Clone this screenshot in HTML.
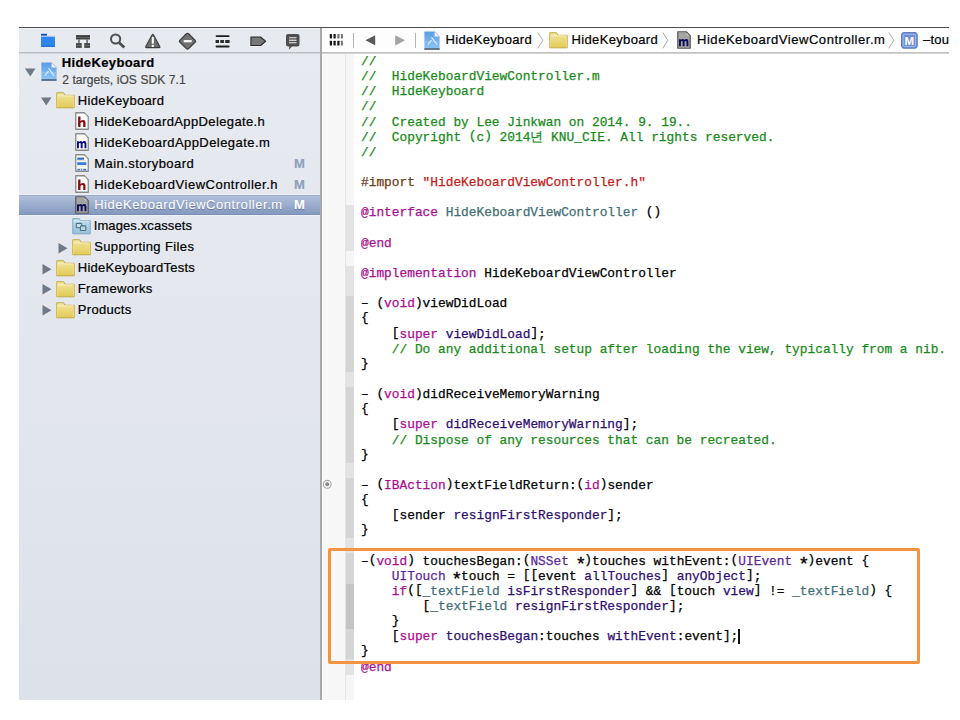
<!DOCTYPE html>
<html><head><meta charset="utf-8"><style>
html,body{margin:0;padding:0;width:960px;height:720px;overflow:hidden;background:#fff;}
body{position:relative;font-family:"Liberation Sans",sans-serif;}
.t{position:absolute;white-space:pre;line-height:15px;font-family:"Liberation Sans",sans-serif;-webkit-text-stroke:0.2px;}
.br{position:relative;top:-1.5px} .bc{position:relative;top:-1px}
pre{margin:0;font-family:"Liberation Mono",monospace;-webkit-text-stroke:0.25px;}
</style></head><body>
<div style="position:absolute;left:19px;top:27px;width:930px;height:1px;background:#4e4e4e"></div>
<!-- sidebar -->
<div style="position:absolute;left:19px;top:28px;width:301px;height:672px;background:linear-gradient(#e7eaef,#e3e6ed 50%,#dde1e9)"></div>
<div style="position:absolute;left:19px;top:28px;width:301px;height:1px;background:#f1f3f6"></div>
<div style="position:absolute;left:19px;top:52px;width:301px;height:1px;background:#b9bcc1"></div>
<div style="position:absolute;left:19px;top:53px;width:301px;height:1px;background:#d3d6db"></div>
<svg style="position:absolute;left:40px;top:33px" width="16" height="15" viewBox="0 0 16 15">
<rect x="1" y="0.8" width="6" height="2" fill="#0a4fd0"/>
<rect x="1" y="2.8" width="14" height="1" fill="#b8cdf0"/>
<rect x="1" y="3.8" width="14" height="10" fill="#2d86ee"/>
<rect x="1" y="12.8" width="14" height="1" fill="#1a6ad8"/>
</svg>
<svg style="position:absolute;left:75px;top:34px" width="16" height="15" viewBox="0 0 16 15">
<rect x="1" y="1.1" width="14" height="4.4" fill="#3e3e3e"/>
<rect x="1" y="3.4" width="14" height="0.7" fill="#777"/>
<rect x="3.25" y="5.5" width="1.4" height="3.7" fill="#5a5a5a"/>
<rect x="11.4" y="5.5" width="1.4" height="3.7" fill="#5a5a5a"/>
<rect x="1" y="9.1" width="5.75" height="4.8" fill="#454545"/>
<rect x="9.25" y="9.1" width="5.75" height="4.8" fill="#454545"/>
<rect x="1" y="11.3" width="5.75" height="0.7" fill="#777"/>
<rect x="9.25" y="11.3" width="5.75" height="0.7" fill="#777"/>
</svg>
<svg style="position:absolute;left:109px;top:33px" width="18" height="16" viewBox="0 0 18 16">
<circle cx="6.6" cy="6" r="4.6" fill="none" stroke="#4f4f4f" stroke-width="2"/>
<path d="M10 9.5 L15.3 14.6" stroke="#4f4f4f" stroke-width="2.8" stroke-linecap="butt"/>
</svg>
<svg style="position:absolute;left:144px;top:33px" width="18" height="16" viewBox="0 0 18 16">
<path d="M8.8 1.3 Q9.3 1.3 9.6 1.9 L15.9 13.8 Q16.1 14.6 15.3 14.6 H2.3 Q1.5 14.6 1.7 13.8 L8 1.9 Q8.3 1.3 8.8 1.3 Z" fill="#6e6e6e" stroke="#3c3c3c" stroke-width="1.1" stroke-linejoin="round"/>
<rect x="7.8" y="3.8" width="2" height="7" rx="0.9" fill="#fff"/>
<circle cx="8.8" cy="12.9" r="1.2" fill="#fff"/>
</svg>
<svg style="position:absolute;left:178px;top:32px" width="19" height="19" viewBox="0 0 19 19">
<path d="M9.5 1.3 Q10.1 1.3 10.6 1.8 L17.2 8.4 Q18.0 9.2 17.2 10.0 L10.6 16.6 Q9.5 17.6 8.4 16.6 L1.8 10.0 Q1.0 9.2 1.8 8.4 L8.4 1.8 Q8.9 1.3 9.5 1.3 Z" fill="#717171" stroke="#3e3e3e" stroke-width="1.3" stroke-linejoin="round"/>
<rect x="5.7" y="8.1" width="8" height="2.2" fill="#fff"/>
</svg>
<svg style="position:absolute;left:215px;top:34px" width="16" height="15" viewBox="0 0 16 15">
<rect x="0.6" y="1.2" width="14" height="1.8" rx="0.9" fill="#1e1e1e"/>
<rect x="0.6" y="6" width="3.4" height="3" fill="#2a2a2a"/>
<rect x="5.3" y="6" width="3.6" height="3" fill="#2a2a2a"/>
<rect x="10.2" y="6" width="4.4" height="3" fill="#2a2a2a"/>
<rect x="0.6" y="11.6" width="14" height="1.8" rx="0.9" fill="#1e1e1e"/>
</svg>
<svg style="position:absolute;left:250px;top:36px" width="17" height="11" viewBox="0 0 17 11">
<path d="M0.9 1 H10.6 L15.6 5.25 L10.6 9.5 H0.9 Z" fill="#777" stroke="#2e2e2e" stroke-width="1.1" stroke-linejoin="round"/>
</svg>
<svg style="position:absolute;left:285px;top:33px" width="16" height="18" viewBox="0 0 16 18">
<path d="M3 1 H12.5 Q14.5 1 14.5 3 V11.5 Q14.5 13.5 12.5 13.5 H7 L3.8 16.8 L4.4 13.5 H3 Q1 13.5 1 11.5 V3 Q1 1 3 1 Z" fill="#4f4f4f"/>
<rect x="4" y="4" width="7.5" height="1.3" fill="#c8c8c8"/>
<rect x="4" y="6.6" width="7.5" height="1.3" fill="#e0e0e0"/>
<rect x="4" y="9" width="7.5" height="1.3" fill="#d0d0d0"/>
</svg>
<svg style="position:absolute;left:25px;top:67.5px" width="11" height="9" viewBox="0 0 11 9"><path d="M0 0.5 H10.5 L5.25 8.5 Z" fill="#6f7a87"/></svg>
<svg style="position:absolute;left:41px;top:62px" width="16" height="19" viewBox="0 0 16 19">
<defs><linearGradient id="ap41" x1="0" y1="0" x2="0" y2="1"><stop offset="0" stop-color="#5b9be3"/><stop offset="1" stop-color="#8fc7f8"/></linearGradient></defs>
<path d="M0.4 0.4 H10.6 L15.6 5.4 V18.6 H0.4 Z" fill="url(#ap41)"/>
<path d="M10.6 0.4 V5.4 H15.6 Z" fill="#f6f9fc"/>
<path d="M10.6 0.4 L15.6 5.4" stroke="#9bb7d6" stroke-width="0.6"/>
<rect x="0.4" y="17.2" width="15.2" height="1.6" fill="#4f5f78"/>
<rect x="1" y="10.2" width="14" height="1.3" fill="#a6cdf3" opacity="0.6"/>
<path d="M7.8 6.6 L12.8 13.4 M7.2 9.4 L4.2 13.4" stroke="#d9ecff" stroke-width="1.2" stroke-linecap="round" fill="none"/>
</svg>
<div class="t" style="left:61.7px;top:55.25px;font-size:13px;letter-spacing:0.39px;color:#000;font-weight:bold;">HideKeyboard</div>
<div class="t" style="left:62.2px;top:72.60px;font-size:12px;letter-spacing:0.1px;color:#474747;">2 targets, iOS SDK 7.1</div>
<svg style="position:absolute;left:41px;top:97px" width="11" height="9" viewBox="0 0 11 9"><path d="M0 0.5 H10.5 L5.25 8.5 Z" fill="#6f7a87"/></svg>
<svg style="position:absolute;left:56px;top:92px" width="20" height="17" viewBox="0 0 20 17">
<defs><linearGradient id="fg560920" x1="0" y1="0" x2="0" y2="1"><stop offset="0" stop-color="#f3e6a0"/><stop offset="1" stop-color="#e2ca55"/></linearGradient></defs>
<path d="M0.8 0.7 H7.6 L9.0 3.3 H18.2 V15.8 H0.8 Z" fill="url(#fg560920)" stroke="#c2aa48" stroke-width="1" stroke-linejoin="round"/>
<path d="M1.3 3.8 H17.7" stroke="#fbf3c6" stroke-width="0.9"/>
<path d="M1.6 4.2 V15.2 M17.4 4.2 V15.2" stroke="#f2e27e" stroke-width="0.8"/>
</svg>
<div class="t" style="left:77.8px;top:92.90px;font-size:13px;letter-spacing:0.35px;color:#000;">HideKeyboard</div>
<svg style="position:absolute;left:75px;top:112.4px" width="14" height="18" viewBox="0 0 14 18">
<path d="M0.75 0.75 H9.3 L13.25 4.7 V17.25 H0.75 Z" fill="#fff" stroke="#8a8a8a" stroke-width="1.3" stroke-linejoin="round"/>
<path d="M9.6 1.6 L12.4 4.4 H10.2 Q9.6 4.4 9.6 3.8 Z" fill="#f3f3f3"/>
<path d="M3.1 4.6 H5.5 V9.2 Q6.4 8.0 8.1 8.0 Q10.5 8.0 10.5 10.4 V15.1 H8.2 V11.0 Q8.2 9.9 7.1 9.9 Q5.5 9.9 5.5 11.6 V15.1 H3.1 Z" fill="#8a0f14"/>
</svg>
<div class="t" style="left:94.2px;top:113.80px;font-size:13px;letter-spacing:0.38px;color:#000;">HideKeboardAppDelegate.h</div>
<svg style="position:absolute;left:75px;top:133.29999999999998px" width="14" height="18" viewBox="0 0 14 18">
<path d="M0.75 0.75 H9.3 L13.25 4.7 V17.25 H0.75 Z" fill="#fff" stroke="#8a8a8a" stroke-width="1.3" stroke-linejoin="round"/>
<path d="M9.6 1.6 L12.4 4.4 H10.2 Q9.6 4.4 9.6 3.8 Z" fill="#f3f3f3"/>
<path d="M2.0 8.3 H3.9 V9.2 Q4.6 8.1 5.8 8.1 Q6.9 8.1 7.3 9.1 Q8.0 8.1 9.3 8.1 Q11.4 8.1 11.4 10.3 V15.3 H9.5 V10.8 Q9.5 9.9 8.7 9.9 Q7.6 9.9 7.6 11.1 V15.3 H5.7 V10.8 Q5.7 9.9 4.9 9.9 Q3.9 9.9 3.9 11.1 V15.3 H2.0 Z" fill="#0c0c82"/>
</svg>
<div class="t" style="left:94.2px;top:134.70px;font-size:13px;letter-spacing:0.44px;color:#000;">HideKeboardAppDelegate.m</div>
<svg style="position:absolute;left:75px;top:154.2px" width="14" height="18" viewBox="0 0 14 18">
<path d="M0.75 0.75 H9.3 L13.25 4.7 V17.25 H0.75 Z" fill="#fff" stroke="#8a8a8a" stroke-width="1.3" stroke-linejoin="round"/>
<path d="M9.6 1.6 L12.4 4.4 H10.2 Q9.6 4.4 9.6 3.8 Z" fill="#f3f3f3"/>
<rect x="2.2" y="3.6" width="6.8" height="2.1" fill="#2f67b5"/>
<rect x="2.2" y="6.3" width="9.2" height="1" fill="#d8d2c8"/>
<rect x="2.2" y="8.2" width="9.2" height="2.9" fill="#3a80d2"/>
<rect x="2.2" y="11.6" width="9.2" height="0.8" fill="#d8d2c8"/>
<rect x="2.2" y="14" width="9.2" height="0.8" fill="#d8d2c8"/>
<rect x="2.2" y="14.9" width="3" height="1.5" rx="0.7" fill="#3a80d2"/><rect x="5.8" y="14.9" width="1.6" height="1.5" rx="0.7" fill="#3a80d2"/><rect x="8.0" y="14.9" width="3.4" height="1.5" rx="0.7" fill="#3a80d2"/>
</svg>
<div class="t" style="left:94.2px;top:155.60px;font-size:13px;letter-spacing:0.45px;color:#000;">Main.storyboard</div>
<div class="t" style="left:294px;top:155.60px;font-size:13px;letter-spacing:0px;color:#8da1bd;font-weight:bold;">M</div>
<svg style="position:absolute;left:75px;top:175.1px" width="14" height="18" viewBox="0 0 14 18">
<path d="M0.75 0.75 H9.3 L13.25 4.7 V17.25 H0.75 Z" fill="#fff" stroke="#8a8a8a" stroke-width="1.3" stroke-linejoin="round"/>
<path d="M9.6 1.6 L12.4 4.4 H10.2 Q9.6 4.4 9.6 3.8 Z" fill="#f3f3f3"/>
<path d="M3.1 4.6 H5.5 V9.2 Q6.4 8.0 8.1 8.0 Q10.5 8.0 10.5 10.4 V15.1 H8.2 V11.0 Q8.2 9.9 7.1 9.9 Q5.5 9.9 5.5 11.6 V15.1 H3.1 Z" fill="#8a0f14"/>
</svg>
<div class="t" style="left:94.2px;top:176.50px;font-size:13px;letter-spacing:0.5px;color:#000;">HideKeboardViewController.h</div>
<div class="t" style="left:294px;top:176.50px;font-size:13px;letter-spacing:0px;color:#8da1bd;font-weight:bold;">M</div>
<div style="position:absolute;left:19px;top:193.5px;width:301px;height:1.5px;background:#eef0f4"></div><div style="position:absolute;left:19px;top:215px;width:301px;height:1px;background:#edf0f4"></div><div style="position:absolute;left:19px;top:195px;width:301px;height:20px;background:linear-gradient(#b1c0dc,#8499be);border-top:1px solid #9dadc9;border-bottom:1px solid #7d92b8;box-sizing:border-box"></div>
<svg style="position:absolute;left:75px;top:196.0px" width="14" height="18" viewBox="0 0 14 18">
<path d="M0.75 0.75 H9.3 L13.25 4.7 V17.25 H0.75 Z" fill="#a4a4a4" stroke="#5a5a5a" stroke-width="1.2" stroke-linejoin="round"/>
<path d="M9.6 1.8 L12.2 4.4 H10.2 Q9.6 4.4 9.6 3.8 Z" fill="#c8c8c8"/>
<path d="M2.0 8.3 H3.9 V9.2 Q4.6 8.1 5.8 8.1 Q6.9 8.1 7.3 9.1 Q8.0 8.1 9.3 8.1 Q11.4 8.1 11.4 10.3 V15.3 H9.5 V10.8 Q9.5 9.9 8.7 9.9 Q7.6 9.9 7.6 11.1 V15.3 H5.7 V10.8 Q5.7 9.9 4.9 9.9 Q3.9 9.9 3.9 11.1 V15.3 H2.0 Z" fill="#0e0c5c"/>
</svg>
<div class="t" style="left:94.2px;top:197.40px;font-size:13px;letter-spacing:0.54px;color:#fff;text-shadow:0 1px 1px rgba(40,50,80,0.45);-webkit-text-stroke:0.1px;">HideKeboardViewController.m</div>
<div class="t" style="left:294px;top:197.40px;font-size:13px;letter-spacing:0px;color:#fff;font-weight:bold;text-shadow:0 1px 1px rgba(40,50,80,0.45);">M</div>
<svg style="position:absolute;left:72px;top:217.6px" width="20" height="17" viewBox="0 0 20 17">
<defs><linearGradient id="xcg" x1="0" y1="0" x2="0" y2="1"><stop offset="0" stop-color="#c4e0ee"/><stop offset="1" stop-color="#96c2da"/></linearGradient></defs>
<path d="M0.8 0.7 H7.4 L8.6 2.6 H18.2 V15.8 H0.8 Z" fill="url(#xcg)" stroke="#7ba4bc" stroke-width="1" stroke-linejoin="round"/>
<path d="M1.3 3.1 H17.7" stroke="#dff0f8" stroke-width="0.8"/>
<rect x="4.3" y="5.4" width="5.4" height="4.4" rx="0.8" fill="#c9e2ef" stroke="#4f7286" stroke-width="1.1"/>
<rect x="8.4" y="7.9" width="5.4" height="4.6" rx="0.8" fill="#b5d6e7" stroke="#4f7286" stroke-width="1.1"/>
</svg>
<div class="t" style="left:93.7px;top:218.30px;font-size:13px;letter-spacing:0.11px;color:#000;">Images.xcassets</div>
<svg style="position:absolute;left:58px;top:242.5px" width="10" height="11" viewBox="0 0 10 11"><path d="M0.5 0 V10.5 L9.5 5.25 Z" fill="#6f7a87"/></svg>
<svg style="position:absolute;left:72px;top:239px" width="20" height="17" viewBox="0 0 20 17">
<defs><linearGradient id="fg7202390" x1="0" y1="0" x2="0" y2="1"><stop offset="0" stop-color="#f3e6a0"/><stop offset="1" stop-color="#e2ca55"/></linearGradient></defs>
<path d="M0.8 0.7 H7.6 L9.0 3.3 H18.2 V15.8 H0.8 Z" fill="url(#fg7202390)" stroke="#c2aa48" stroke-width="1" stroke-linejoin="round"/>
<path d="M1.3 3.8 H17.7" stroke="#fbf3c6" stroke-width="0.9"/>
<path d="M1.6 4.2 V15.2 M17.4 4.2 V15.2" stroke="#f2e27e" stroke-width="0.8"/>
</svg>
<div class="t" style="left:94.2px;top:239.20px;font-size:13px;letter-spacing:0.39px;color:#000;">Supporting Files</div>
<svg style="position:absolute;left:41.5px;top:263.5px" width="10" height="11" viewBox="0 0 10 11"><path d="M0.5 0 V10.5 L9.5 5.25 Z" fill="#6f7a87"/></svg>
<svg style="position:absolute;left:56px;top:260.1px" width="20" height="17" viewBox="0 0 20 17">
<defs><linearGradient id="fg5602601" x1="0" y1="0" x2="0" y2="1"><stop offset="0" stop-color="#f3e6a0"/><stop offset="1" stop-color="#e2ca55"/></linearGradient></defs>
<path d="M0.8 0.7 H7.6 L9.0 3.3 H18.2 V15.8 H0.8 Z" fill="url(#fg5602601)" stroke="#c2aa48" stroke-width="1" stroke-linejoin="round"/>
<path d="M1.3 3.8 H17.7" stroke="#fbf3c6" stroke-width="0.9"/>
<path d="M1.6 4.2 V15.2 M17.4 4.2 V15.2" stroke="#f2e27e" stroke-width="0.8"/>
</svg>
<div class="t" style="left:77.8px;top:260.10px;font-size:13px;letter-spacing:0.27px;color:#000;">HideKeyboardTests</div>
<svg style="position:absolute;left:41.5px;top:284.4px" width="10" height="11" viewBox="0 0 10 11"><path d="M0.5 0 V10.5 L9.5 5.25 Z" fill="#6f7a87"/></svg>
<svg style="position:absolute;left:56px;top:281.0px" width="20" height="17" viewBox="0 0 20 17">
<defs><linearGradient id="fg5602810" x1="0" y1="0" x2="0" y2="1"><stop offset="0" stop-color="#f3e6a0"/><stop offset="1" stop-color="#e2ca55"/></linearGradient></defs>
<path d="M0.8 0.7 H7.6 L9.0 3.3 H18.2 V15.8 H0.8 Z" fill="url(#fg5602810)" stroke="#c2aa48" stroke-width="1" stroke-linejoin="round"/>
<path d="M1.3 3.8 H17.7" stroke="#fbf3c6" stroke-width="0.9"/>
<path d="M1.6 4.2 V15.2 M17.4 4.2 V15.2" stroke="#f2e27e" stroke-width="0.8"/>
</svg>
<div class="t" style="left:77.8px;top:281.00px;font-size:13px;letter-spacing:0.34px;color:#000;">Frameworks</div>
<svg style="position:absolute;left:41.5px;top:305.29999999999995px" width="10" height="11" viewBox="0 0 10 11"><path d="M0.5 0 V10.5 L9.5 5.25 Z" fill="#6f7a87"/></svg>
<svg style="position:absolute;left:56px;top:301.9px" width="20" height="17" viewBox="0 0 20 17">
<defs><linearGradient id="fg5603019" x1="0" y1="0" x2="0" y2="1"><stop offset="0" stop-color="#f3e6a0"/><stop offset="1" stop-color="#e2ca55"/></linearGradient></defs>
<path d="M0.8 0.7 H7.6 L9.0 3.3 H18.2 V15.8 H0.8 Z" fill="url(#fg5603019)" stroke="#c2aa48" stroke-width="1" stroke-linejoin="round"/>
<path d="M1.3 3.8 H17.7" stroke="#fbf3c6" stroke-width="0.9"/>
<path d="M1.6 4.2 V15.2 M17.4 4.2 V15.2" stroke="#f2e27e" stroke-width="0.8"/>
</svg>
<div class="t" style="left:77.8px;top:301.90px;font-size:13px;letter-spacing:0.3px;color:#000;">Products</div>
<!-- divider -->
<div style="position:absolute;left:320px;top:28px;width:2px;height:672px;background:#a9a9a9"></div>
<!-- jump bar -->
<div style="position:absolute;left:322px;top:28px;width:627px;height:24px;background:#fdfdfd"></div>

<div style="position:absolute;left:322px;top:28px;width:627px;height:24px;overflow:hidden">
<div style="position:absolute;left:-322px;top:-28px;width:960px;height:60px">
<svg style="position:absolute;left:329px;top:33px" width="15" height="14" viewBox="0 0 15 14">
<g fill="#151515">
<rect x="0.8" y="1" width="2.2" height="4.4" rx="0.5"/><rect x="4.5" y="1" width="2.2" height="4.4" rx="0.5"/>
<rect x="0.8" y="7.8" width="2.2" height="4.6" rx="0.5"/><rect x="4.5" y="7.8" width="2.2" height="4.6" rx="0.5"/><rect x="8.3" y="7.8" width="2.2" height="4.6" rx="0.5"/>
</g>
<g fill="#707070"><rect x="8.3" y="1" width="2.2" height="4.4" rx="0.5"/><rect x="11.9" y="1" width="2.0" height="4.4" rx="0.5"/><rect x="11.9" y="7.8" width="2.0" height="4.6" rx="0.5"/></g>
</svg>
<div style="position:absolute;left:353px;top:33px;width:1px;height:15px;background:#b4b4b4"></div>
<svg style="position:absolute;left:365px;top:35px" width="11" height="11" viewBox="0 0 11 11"><path d="M0.4 5.25 L10.2 0.2 V10.3 Z" fill="#5a5a5a"/></svg>
<svg style="position:absolute;left:394.5px;top:35px" width="11" height="11" viewBox="0 0 11 11"><path d="M0.2 0.2 V10.5 L10 5.35 Z" fill="#a3a3a3"/></svg>
<div style="position:absolute;left:415px;top:33px;width:1px;height:15px;background:#b4b4b4"></div>
<svg style="position:absolute;left:424px;top:30.5px" width="16" height="19" viewBox="0 0 16 19">
<defs><linearGradient id="ap424" x1="0" y1="0" x2="0" y2="1"><stop offset="0" stop-color="#5b9be3"/><stop offset="1" stop-color="#8fc7f8"/></linearGradient></defs>
<path d="M0.4 0.4 H10.6 L15.6 5.4 V18.6 H0.4 Z" fill="url(#ap424)"/>
<path d="M10.6 0.4 V5.4 H15.6 Z" fill="#f6f9fc"/>
<path d="M10.6 0.4 L15.6 5.4" stroke="#9bb7d6" stroke-width="0.6"/>
<rect x="0.4" y="17.2" width="15.2" height="1.6" fill="#4f5f78"/>
<rect x="1" y="10.2" width="14" height="1.3" fill="#a6cdf3" opacity="0.6"/>
<path d="M7.8 6.6 L12.8 13.4 M7.2 9.4 L4.2 13.4" stroke="#d9ecff" stroke-width="1.2" stroke-linecap="round" fill="none"/>
</svg>
<div class="t" style="left:445.5px;top:32.30px;font-size:13px;letter-spacing:0.35px;color:#000;">HideKeyboard</div>
<svg style="position:absolute;left:536.5px;top:32px" width="7" height="17" viewBox="0 0 7 17"><path d="M0.8 0.5 L5.8 8.3 L0.8 16.3" fill="none" stroke="#aaa" stroke-width="1"/></svg>
<svg style="position:absolute;left:548.5px;top:31.5px" width="20" height="17" viewBox="0 0 20 17">
<defs><linearGradient id="fg5485315" x1="0" y1="0" x2="0" y2="1"><stop offset="0" stop-color="#f3e6a0"/><stop offset="1" stop-color="#e2ca55"/></linearGradient></defs>
<path d="M0.8 0.7 H7.6 L9.0 3.3 H18.2 V15.8 H0.8 Z" fill="url(#fg5485315)" stroke="#c2aa48" stroke-width="1" stroke-linejoin="round"/>
<path d="M1.3 3.8 H17.7" stroke="#fbf3c6" stroke-width="0.9"/>
<path d="M1.6 4.2 V15.2 M17.4 4.2 V15.2" stroke="#f2e27e" stroke-width="0.8"/>
</svg>
<div class="t" style="left:571.5px;top:32.30px;font-size:13px;letter-spacing:0.35px;color:#000;">HideKeyboard</div>
<svg style="position:absolute;left:662px;top:32px" width="7" height="17" viewBox="0 0 7 17"><path d="M0.8 0.5 L5.8 8.3 L0.8 16.3" fill="none" stroke="#aaa" stroke-width="1"/></svg>
<svg style="position:absolute;left:676.5px;top:30.8px" width="14" height="18" viewBox="0 0 14 18">
<path d="M0.75 0.75 H9.3 L13.25 4.7 V17.25 H0.75 Z" fill="#a4a4a4" stroke="#5a5a5a" stroke-width="1.2" stroke-linejoin="round"/>
<path d="M9.6 1.8 L12.2 4.4 H10.2 Q9.6 4.4 9.6 3.8 Z" fill="#c8c8c8"/>
<path d="M2.0 8.3 H3.9 V9.2 Q4.6 8.1 5.8 8.1 Q6.9 8.1 7.3 9.1 Q8.0 8.1 9.3 8.1 Q11.4 8.1 11.4 10.3 V15.3 H9.5 V10.8 Q9.5 9.9 8.7 9.9 Q7.6 9.9 7.6 11.1 V15.3 H5.7 V10.8 Q5.7 9.9 4.9 9.9 Q3.9 9.9 3.9 11.1 V15.3 H2.0 Z" fill="#0e0c5c"/>
</svg>
<div class="t" style="left:697px;top:32.30px;font-size:13px;letter-spacing:0.54px;color:#000;">HideKeboardViewController.m</div>
<svg style="position:absolute;left:887.5px;top:32px" width="7" height="17" viewBox="0 0 7 17"><path d="M0.8 0.5 L5.8 8.3 L0.8 16.3" fill="none" stroke="#aaa" stroke-width="1"/></svg>
<svg style="position:absolute;left:901px;top:31.5px" width="17" height="17" viewBox="0 0 17 17">
<rect x="0.6" y="0.6" width="15.6" height="15.6" rx="2.2" fill="#6e90d6" stroke="#5577bb" stroke-width="1"/>
<rect x="2.2" y="2.2" width="12.4" height="12.4" rx="1" fill="none" stroke="#a9c0ee" stroke-width="0.9"/>
<text x="8.4" y="12.9" text-anchor="middle" font-family="Liberation Sans" font-weight="bold" font-size="11.5" fill="#fff">M</text>
</svg>
<div class="t" style="left:923px;top:32.30px;font-size:13px;letter-spacing:0.2px;color:#000;">–touchesBegan:withEvent:</div>
</div></div>
<!-- gutter -->
<div style="position:absolute;left:322px;top:28px;width:1px;height:672px;background:#fafafa"></div>
<div style="position:absolute;left:323px;top:53px;width:22px;height:647px;background:#f7f7f7"></div>
<div style="position:absolute;left:345px;top:53px;width:1px;height:647px;background:#e4e4e4"></div>
<div style="position:absolute;left:346px;top:53px;width:8px;height:647px;background:#f6f6f6"><div style="position:absolute;left:0;top:152.20px;width:8px;height:45.42px;background:#e3e3e3"></div><div style="position:absolute;left:0;top:212.76px;width:8px;height:408.78px;background:#e3e3e3"></div><div style="position:absolute;left:0;top:243.04px;width:8px;height:75.70px;background:#d5d5d5"></div><div style="position:absolute;left:0;top:333.88px;width:8px;height:75.70px;background:#d5d5d5"></div><div style="position:absolute;left:0;top:424.72px;width:8px;height:60.56px;background:#d5d5d5"></div><div style="position:absolute;left:0;top:500.42px;width:8px;height:105.98px;background:#d5d5d5"></div><div style="position:absolute;left:0;top:530.70px;width:8px;height:45.42px;background:#c4c4c4"></div></div>
<div style="position:absolute;left:322px;top:52px;width:627px;height:1px;background:#c2c2c2"></div><div style="position:absolute;left:322px;top:53px;width:627px;height:1px;background:#d2d2d2"></div>
<svg style="position:absolute;left:322px;top:479px" width="11" height="11" viewBox="0 0 11 11"><circle cx="5.25" cy="5.3" r="3.9" fill="none" stroke="#a8a8a8" stroke-width="1.1"/><circle cx="5.25" cy="5.3" r="2" fill="#8a8a8a"/></svg>
<!-- code -->
<pre style="position:absolute;left:361px;top:54.0px;font-size:12.83px;line-height:15.14px;color:#000"><span style="color:#178a18">//</span>
<span style="color:#178a18">//  HideKeboardViewController.m</span>
<span style="color:#178a18">//  HideKeyboard</span>
<span style="color:#178a18">//</span>
<span style="color:#178a18">//  Created by Lee Jinkwan on 2014. 9. 19..</span>
<span style="color:#178a18">//  Copyright <span class="br">(</span>c<span class="br">)</span> 2014</span><span style="color:#178a18">년</span><span style="color:#178a18"> KNU_CIE. All rights reserved.</span>
<span style="color:#178a18">//</span>

<span style="color:#6e3b20">#import </span><span style="color:#c41a16">&quot;HideKeboardViewController.h&quot;</span>

<span style="color:#aa0d91">@interface</span> <span style="color:#3f6e74">HideKeboardViewController</span> <span class="br">(</span><span class="br">)</span>

<span style="color:#aa0d91">@end</span>

<span style="color:#aa0d91">@implementation</span> HideKeboardViewController

– <span class="br">(</span><span style="color:#aa0d91">void</span><span class="br">)</span>viewDidLoad
<span class="bc">{</span>
    <span class="br">[</span><span style="color:#aa0d91">super</span> <span style="color:#2e0d6e">viewDidLoad</span><span class="br">]</span>;
<span style="color:#178a18">    // Do any additional setup after loading the view, typically from a nib.</span>
<span class="bc">}</span>

– <span class="br">(</span><span style="color:#aa0d91">void</span><span class="br">)</span>didReceiveMemoryWarning
<span class="bc">{</span>
    <span class="br">[</span><span style="color:#aa0d91">super</span> <span style="color:#2e0d6e">didReceiveMemoryWarning</span><span class="br">]</span>;
<span style="color:#178a18">    // Dispose of any resources that can be recreated.</span>
<span class="bc">}</span>

– <span class="br">(</span><span style="color:#aa0d91">IBAction</span><span class="br">)</span>textFieldReturn:<span class="br">(</span><span style="color:#aa0d91">id</span><span class="br">)</span>sender
<span class="bc">{</span>
    <span class="br">[</span>sender <span style="color:#2e0d6e">resignFirstResponder</span><span class="br">]</span>;
<span class="bc">}</span>

–<span class="br">(</span><span style="color:#aa0d91">void</span><span class="br">)</span> touchesBegan:<span class="br">(</span><span style="color:#5c2699">NSSet</span> <span style="display:inline-block;transform:translateY(3.9px) scale(1.45)">*</span><span class="br">)</span>touches withEvent:<span class="br">(</span><span style="color:#5c2699">UIEvent</span> <span style="display:inline-block;transform:translateY(3.9px) scale(1.45)">*</span><span class="br">)</span>event <span class="bc">{</span>
    <span style="color:#5c2699">UITouch</span> <span style="display:inline-block;transform:translateY(3.9px) scale(1.45)">*</span>touch = <span class="br">[</span><span class="br">[</span>event <span style="color:#2e0d6e">allTouches</span><span class="br">]</span> <span style="color:#2e0d6e">anyObject</span><span class="br">]</span>;
    <span style="color:#aa0d91">if</span><span class="br">(</span><span class="br">[</span><span style="color:#3f6e74">_textField</span> <span style="color:#2e0d6e">isFirstResponder</span><span class="br">]</span> &amp;&amp; <span class="br">[</span>touch <span style="color:#2e0d6e">view</span><span class="br">]</span> != <span style="color:#3f6e74">_textField</span><span class="br">)</span> <span class="bc">{</span>
        <span class="br">[</span><span style="color:#3f6e74">_textField</span> <span style="color:#2e0d6e">resignFirstResponder</span><span class="br">]</span>;
    <span class="bc">}</span>
    <span class="br">[</span><span style="color:#aa0d91">super</span> <span style="color:#2e0d6e">touchesBegan</span>:touches <span style="color:#2e0d6e">withEvent</span>:event<span class="br">]</span>;
<span class="bc">}</span>
<span style="color:#aa0d91">@end</span></pre>
<!-- cursor -->
<div style="position:absolute;left:738px;top:629px;width:1.6px;height:15px;background:#111"></div>
<!-- orange highlight -->
<div style="position:absolute;left:328px;top:548px;width:592px;height:116px;border:3px solid #f39442;border-radius:2px;box-sizing:border-box"></div>
</body></html>
